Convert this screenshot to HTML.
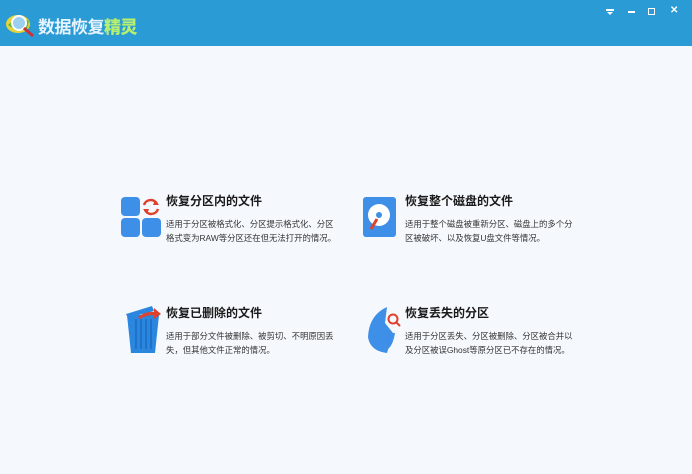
<!DOCTYPE html>
<html><head><meta charset="utf-8"><style>
*{margin:0;padding:0;box-sizing:border-box}
body{width:692px;height:474px;background:#f5f9fd;font-family:"Liberation Sans","Noto Sans CJK SC",sans-serif;position:relative;overflow:hidden}
.hdr{position:absolute;left:0;top:0;width:692px;height:46px;background:#2a9bd5}
.logo{position:absolute;left:38px;top:13px;font-size:17px;font-weight:bold;color:#e8f4ff;letter-spacing:-0.5px}
.logo b{color:#b7f070}
.t{position:absolute;font-size:12px;font-weight:bold;color:#1a1a1a;white-space:nowrap}
.d{position:absolute;font-size:8.4px;line-height:14px;color:#333;width:175px}
.ic{position:absolute}
</style></head><body>
<div class="hdr">
<svg class="ic" style="left:5px;top:11px" width="32" height="28" viewBox="0 0 32 28">
<ellipse cx="13" cy="13" rx="12" ry="9" fill="#e7d23a"/>
<path d="M3 14 Q13 4 24 10 L22 18 Q12 22 3 14Z" fill="#5fb848"/>
<circle cx="14" cy="12" r="7" fill="#9dd0f0" stroke="#fff" stroke-width="2"/>
<line x1="19" y1="17" x2="28" y2="25" stroke="#c33" stroke-width="3"/>
</svg>
<div class="logo">数据恢复<b>精灵</b></div>
<div style="position:absolute;left:606px;top:9px;width:8px;height:2px;background:#fff"></div>
<div style="position:absolute;left:607px;top:12px;width:0;height:0;border-left:3px solid transparent;border-right:3px solid transparent;border-top:3px solid #fff"></div>
<div style="position:absolute;left:628px;top:11px;width:7px;height:2px;background:#fff"></div>
<div style="position:absolute;left:648px;top:8px;width:7px;height:7px;border:1.5px solid #fff"></div>
<div style="position:absolute;left:670px;top:5px;color:#fff;font-size:10px;font-weight:bold">✕</div>
</div>

<svg class="ic" style="left:121px;top:197px" width="42" height="42" viewBox="0 0 42 42">
<rect x="0" y="0" width="19" height="19" rx="4" fill="#3d8fe8"/>
<rect x="0" y="21" width="19" height="19" rx="4" fill="#3d8fe8"/>
<rect x="21" y="21" width="19" height="19" rx="4" fill="#3d8fe8"/>
<path d="M23 8 A7 7 0 0 1 36 7" stroke="#e0412c" stroke-width="2.5" fill="none"/>
<path d="M37 12 A7 7 0 0 1 24 13" stroke="#e0412c" stroke-width="2.5" fill="none"/>
<path d="M34 3 L38 8 L32 8Z" fill="#e0412c"/><path d="M26 17 L22 12 L28 12Z" fill="#e0412c"/>
</svg>
<div class="t" style="left:166px;top:192px">恢复分区内的文件</div>
<div class="d" style="left:166px;top:217px">适用于分区被格式化、分区提示格式化、分区格式变为RAW等分区还在但无法打开的情况。</div>

<svg class="ic" style="left:362px;top:196px" width="36" height="42" viewBox="0 0 36 42">
<rect x="1" y="1" width="33" height="40" rx="3" fill="#3d8fe8"/>
<circle cx="17" cy="19" r="11" fill="#fff"/>
<circle cx="17" cy="19" r="3" fill="#3d8fe8"/>
<line x1="15" y1="23" x2="9" y2="33" stroke="#e0412c" stroke-width="3"/>
</svg>
<div class="t" style="left:405px;top:192px">恢复整个磁盘的文件</div>
<div class="d" style="left:405px;top:217px">适用于整个磁盘被重新分区、磁盘上的多个分区被破坏、以及恢复U盘文件等情况。</div>

<svg class="ic" style="left:124px;top:303px" width="38" height="52" viewBox="0 0 38 52">
<path d="M3 12 L35 12 L31 50 L7 50Z" fill="#2a86de"/>
<path d="M12 16 V46 M17 16 V46 M22 16 V46 M27 16 V46" stroke="#1a6dc0" stroke-width="1.5"/>
<path d="M2 11 L28 3 L30 8 L4 15Z" fill="#2a86de"/>
<path d="M14 14 Q22 8 30 9 L30 5 L37 11 L30 16 L30 12 Q22 12 16 16Z" fill="#e0412c"/>
</svg>
<div class="t" style="left:166px;top:304px">恢复已删除的文件</div>
<div class="d" style="left:166px;top:329px">适用于部分文件被删除、被剪切、不明原因丢失，但其他文件正常的情况。</div>

<svg class="ic" style="left:367px;top:305px" width="36" height="50" viewBox="0 0 36 50">
<path d="M20 2 Q2 10 1 32 Q3 46 20 48 L26 28 L18 18Z" fill="#3d8fe8"/>
<path d="M22 28 L28 28 Q26 40 21 44Z" fill="#3d8fe8"/>
<circle cx="26" cy="14" r="4.5" fill="none" stroke="#e0412c" stroke-width="2"/>
<line x1="29" y1="17" x2="33" y2="21" stroke="#e0412c" stroke-width="2"/>
</svg>
<div class="t" style="left:405px;top:304px">恢复丢失的分区</div>
<div class="d" style="left:405px;top:329px">适用于分区丢失、分区被删除、分区被合并以及分区被误Ghost等原分区已不存在的情况。</div>
</body></html>
